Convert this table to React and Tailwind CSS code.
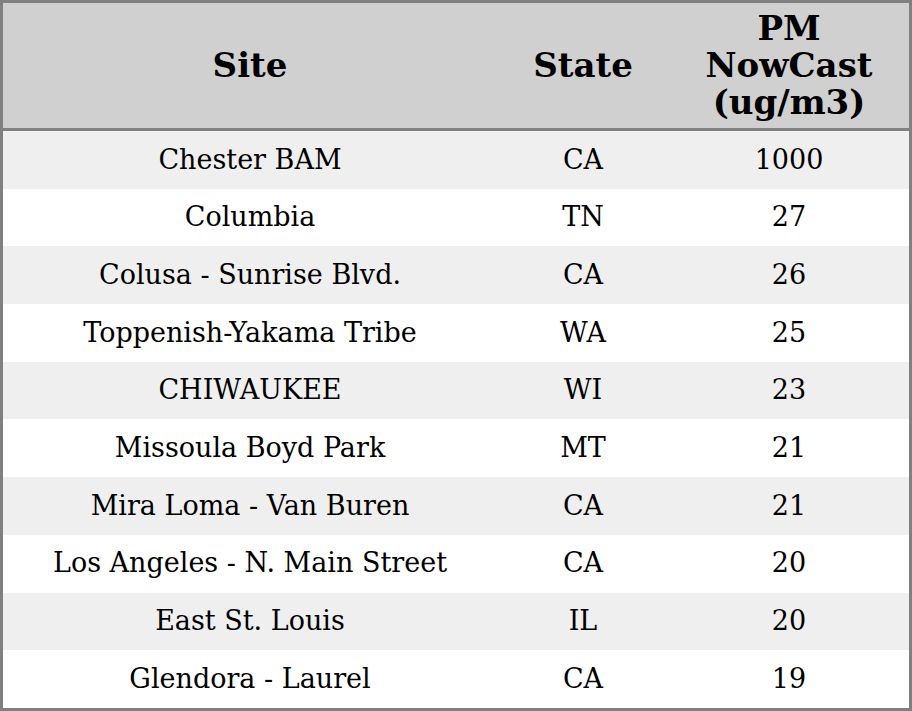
const rows = [
  ["Chester BAM", "CA", "1000"],
  ["Columbia", "TN", "27"],
  ["Colusa - Sunrise Blvd.", "CA", "26"],
  ["Toppenish-Yakama Tribe", "WA", "25"],
  ["CHIWAUKEE", "WI", "23"],
  ["Missoula Boyd Park", "MT", "21"],
  ["Mira Loma - Van Buren", "CA", "21"],
  ["Los Angeles - N. Main Street", "CA", "20"],
  ["East St. Louis", "IL", "20"],
  ["Glendora - Laurel", "CA", "19"],
];

export default function App() {
  return (
    <div className="w-[912px] h-[711px] border-[3px] border-[#808080] bg-white font-['DejaVu_Serif',serif] text-black overflow-hidden">
      <div className="grid grid-cols-[494px_172px_240px] h-[128px] bg-[#d0d0d0] border-b-[3px] border-[#808080] font-bold text-[34px] leading-[37px]">
        <div className="flex items-center justify-center">Site</div>
        <div className="flex items-center justify-center">State</div>
        <div className="flex items-center justify-center text-center">
          PM
          <br />
          NowCast
          <br />
          (ug/m3)
        </div>
      </div>
      {rows.map((r, i) => (
        <div
          key={i}
          className={`grid grid-cols-[494px_172px_240px] h-[57.7px] items-center text-[27px] ${
            i % 2 === 0 ? "bg-[#efefef]" : "bg-white"
          }`}
        >
          <div className="text-center">{r[0]}</div>
          <div className="text-center">{r[1]}</div>
          <div className="text-center">{r[2]}</div>
        </div>
      ))}
    </div>
  );
}
